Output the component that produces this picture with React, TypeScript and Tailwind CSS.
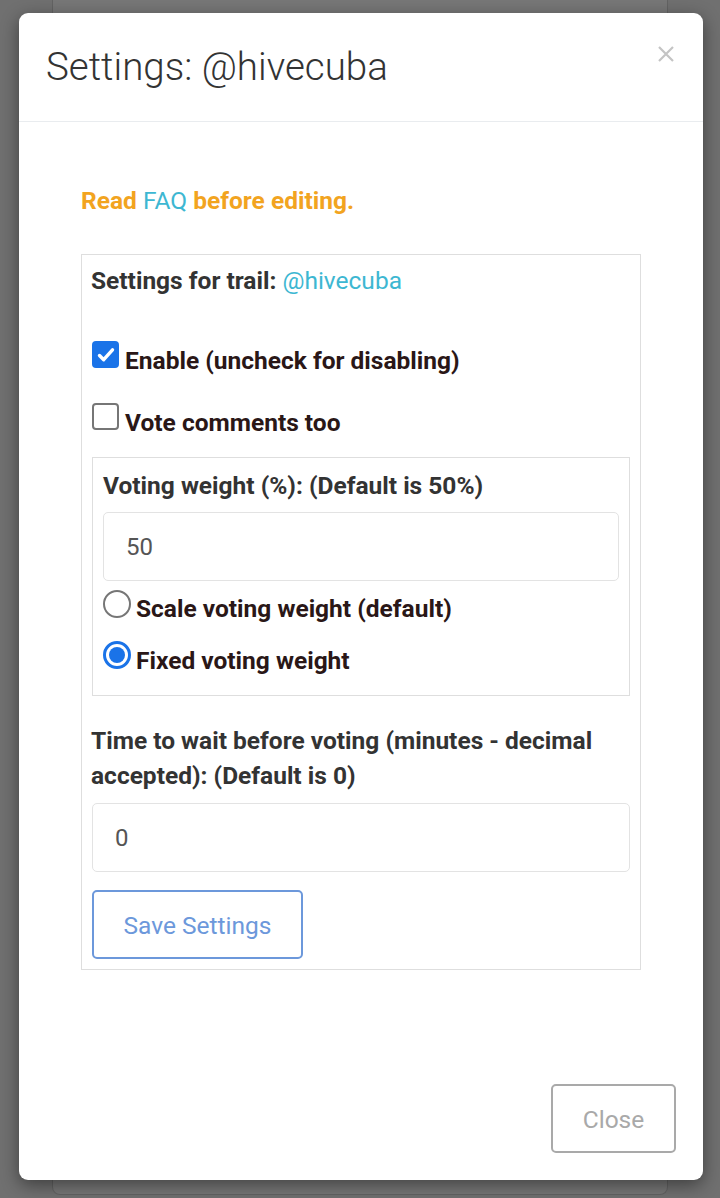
import React from 'react';

const font = { fontFamily: 'Roboto, "Noto Sans", Arial, sans-serif' };

const Checkbox: React.FC<{ checked?: boolean }> = ({ checked }) =>
  checked ? (
    <span className="w-[27px] h-[27px] rounded-[4px] bg-[#1a73e8] flex items-center justify-center shrink-0">
      <svg width="20" height="20" viewBox="0 0 20 20" fill="none">
        <path d="M3.5 10.5l4.2 4.2L16.5 4.8" stroke="#fff" strokeWidth="3.4" strokeLinecap="round" strokeLinejoin="round" />
      </svg>
    </span>
  ) : (
    <span className="block w-[27px] h-[27px] rounded-[4px] border-2 border-[#767676] bg-white shrink-0" />
  );

const Radio: React.FC<{ checked?: boolean }> = ({ checked }) =>
  checked ? (
    <span className="w-[28px] h-[28px] rounded-full border-[3px] border-[#1a73e8] bg-white flex items-center justify-center shrink-0">
      <span className="block w-[16px] h-[16px] rounded-full bg-[#1a73e8]" />
    </span>
  ) : (
    <span className="block w-[28px] h-[28px] rounded-full border-2 border-[#767676] bg-white shrink-0" />
  );

export default function App() {
  return (
    <div className="relative w-[720px] h-[1198px] overflow-hidden bg-[#707070]" style={font}>
      {/* page behind the overlay */}
      <div className="mx-[52px] h-[1195px] bg-[#777777] border-x border-b border-[#636363] rounded-b-[8px]" />

      {/* modal */}
      <div className="absolute left-[19px] top-[13px] w-[684px] h-[1167px] bg-white rounded-[9px] shadow-[0_5px_18px_rgba(0,0,0,0.45)] flex flex-col">
        <div className="relative h-[109px] shrink-0 border-b border-[#e9ecef] flex items-center px-[27px]">
          <h1 className="text-[38.5px] font-light text-[#333] leading-none">Settings: @hivecuba</h1>
          <button className="absolute right-[29px] top-[33px] w-[16px] h-[16px]">
            <svg width="16" height="16" viewBox="0 0 16 16">
              <path d="M1 1l14 14M15 1L1 15" stroke="#c4c4c4" strokeWidth="2.2" />
            </svg>
          </button>
        </div>

        <div className="flex-1 px-[62px] pt-[64px]">
          <p className="text-[24.5px] font-bold leading-[30px] text-[#f2a41f]">
            Read <a className="font-normal text-[#3db7d2]">FAQ</a> before editing.
          </p>

          <div className="mt-[38px] border border-[#dedede] p-[10px]">
            <div className="text-[24.5px] font-bold leading-[32px] text-[#333] -ml-[1px]">
              Settings for trail: <span className="font-normal text-[#3db7d2]">@hivecuba</span>
            </div>

            <label className="mt-[42px] h-[32px] flex items-start gap-[6px]">
              <span className="mt-[2px]"><Checkbox checked /></span>
              <span className="mt-[9px] text-[24.5px] font-bold leading-[26px] text-[#2a1717]">Enable (uncheck for disabling)</span>
            </label>

            <label className="mt-[29px] h-[32px] flex items-start gap-[6px]">
              <span className="mt-[3px]"><Checkbox /></span>
              <span className="mt-[10px] text-[24.5px] font-bold leading-[26px] text-[#2a1717]">Vote comments too</span>
            </label>

            <div className="mt-[25px] border border-[#dedede] px-[10px] pt-[10px] pb-[25px]">
              <div className="text-[24.5px] font-bold leading-[36px] text-[#333]">Voting weight (%): (Default is 50%)</div>
              <div className="mt-[8px] h-[69px] border border-[#e3e3e3] rounded-[5px] flex items-center px-[22px] text-[24px] text-[#555]">50</div>
              <label className="mt-[8px] h-[30px] flex items-start gap-[5px]">
                <span className="mt-[1px]"><Radio /></span>
                <span className="mt-[7px] text-[24.5px] font-bold leading-[26px] text-[#2a1717]">Scale voting weight (default)</span>
              </label>
              <label className="mt-[21px] h-[30px] flex items-start gap-[5px]">
                <span className="mt-[1px]"><Radio checked /></span>
                <span className="mt-[8px] text-[24.5px] font-bold leading-[26px] text-[#2a1717]">Fixed voting weight</span>
              </label>
            </div>

            <div className="mt-[27px] text-[24.5px] font-bold leading-[35px] text-[#333] -ml-[1px]">
              Time to wait before voting (minutes - decimal accepted): (Default is 0)
            </div>
            <div className="mt-[10px] h-[69px] border border-[#e3e3e3] rounded-[5px] flex items-center px-[22px] text-[24px] text-[#555]">0</div>
            <button className="mt-[18px] h-[69px] w-[211px] border-2 border-[#6c98db] rounded-[5px] pt-[3px] text-[24.5px] text-[#6c98db]">
              Save Settings
            </button>
          </div>
        </div>

        <div className="flex justify-end pr-[27px] pb-[27px]">
          <button className="h-[69px] w-[125px] border-2 border-[#a9a9a9] rounded-[5px] pt-[3px] text-[24.5px] text-[#a9a9a9]">
            Close
          </button>
        </div>
      </div>
    </div>
  );
}
